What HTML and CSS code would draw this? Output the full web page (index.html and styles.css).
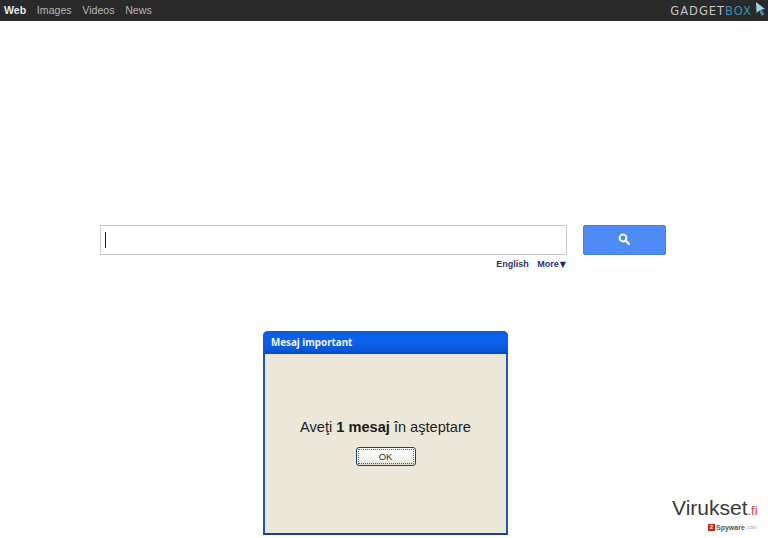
FILE: index.html
```html
<!DOCTYPE html>
<html lang="ro">
<head>
<meta charset="utf-8">
<title>GadgetBox</title>
<link rel="stylesheet" href="styles.css">
</head>
<body>
<header class="topbar">
  <nav class="tabs">
    <a class="tab tab-active">Web</a>
    <a class="tab">Images</a>
    <a class="tab">Videos</a>
    <a class="tab">News</a>
  </nav>
  <div class="logo">
    <span class="logo-gadget">GADGET</span><span class="logo-box">BOX</span>
    <svg class="logo-cursor" width="11" height="14" viewBox="0 0 11 14"><path d="M1 0 L10 7 L6.5 7.5 L9 12.5 L6.5 13.5 L4.5 8.5 L1.5 11 Z" fill="#9fd0dc"/><path d="M4.5 8.5 L6.5 13.5 L9 12.5 L6.5 7.5 Z" fill="#3d8aa6"/></svg>
  </div>
</header>
<main class="page">
  <section class="search">
    <div class="search-row">
      <div class="search-input"><span class="caret"></span></div>
      <button class="search-btn" aria-label="Search">
        <svg class="search-icon" width="12" height="12" viewBox="0 0 12 12"><circle cx="5" cy="5" r="3.4" fill="none" stroke="#fff" stroke-width="2"/><path d="M7.6 7.6 L11 11" stroke="#fff" stroke-width="2.4" stroke-linecap="round"/></svg>
      </button>
    </div>
    <div class="search-links">
      <a class="link-english">English</a>
      <a class="link-more">More<span class="arrow">▼</span></a>
    </div>
  </section>
  <section class="dialog">
    <div class="dialog-title">Mesaj important</div>
    <div class="dialog-body">
      <p class="dialog-msg">Aveţi <b>1 mesaj</b> în aşteptare</p>
      <button class="dialog-ok"><span class="dialog-ok-inner">OK</span></button>
    </div>
  </section>
</main>
<div class="watermark">
  <div class="wm-main">Virukset<span class="wm-fi">.fi</span></div>
  <div class="wm-sub"><span class="wm-badge">2</span>Spyware<span class="wm-com">.com</span></div>
</div>
</body>
</html>
```
FILE: styles.css
```css
* { box-sizing: border-box; }
html, body { margin: 0; padding: 0; }
body {
  width: 768px;
  height: 538px;
  overflow: hidden;
  background: #fff;
  font-family: "Liberation Sans", Arial, sans-serif;
  position: relative;
}
.topbar {
  height: 21px;
  background: #2a2a2a;
  display: flex;
  align-items: center;
  justify-content: space-between;
  padding: 0 2px 0 4px;
}
.tabs { display: flex; gap: 10.7px; }
.tab { font-size: 10.6px; color: #b4b4b4; line-height: 21px; }
.tab-active { color: #e8e8e8; font-weight: bold; }
.logo { display: flex; align-items: center; height: 21px; }
.logo-gadget, .logo-box {
  font-size: 11.5px;
  letter-spacing: 1px;
  font-family: "DejaVu Sans", sans-serif;
  line-height: 14px;
}
.logo-gadget { color: #c4c4c4; }
.logo-box { color: #3b8fb4; }
.logo-cursor { margin: -3px 0 0 3px; }
.page { padding-top: 204px; }
.search { margin-left: 100px; width: 566px; }
.search-row { display: flex; gap: 16px; height: 30px; }
.search-input {
  width: 467px;
  border: 1px solid #c9c9c9;
  background: #fff;
  padding: 6px 0 0 4px;
}
.caret { display: block; width: 1px; height: 16px; background: #222; }
.search-btn {
  width: 83px;
  padding: 0 2px 2px 0;
  border: 1px solid #4a7fd8;
  border-radius: 2px;
  background: #4d8cf4;
  display: flex;
  align-items: center;
  justify-content: center;
}
.search-links {
  width: 466px;
  display: flex;
  justify-content: flex-end;
  gap: 8.5px;
  margin-top: 3px;
  font-size: 9px;
  font-weight: bold;
  line-height: 12px;
}
.link-english { color: #2a3560; }
.link-more { color: #2b2b8c; }
.arrow { font-size: 8px; margin-left: 1px; color: #1c2a70; font-family: "DejaVu Sans", sans-serif; }
.dialog {
  margin: 60px 0 0 263px;
  width: 245px;
  height: 204px;
  background: #ebe8d9;
  border: 2px solid #2455b4;
  border-bottom-color: #1a3f96;
  border-top: 0;
  border-radius: 5px 5px 0 0;
  display: flex;
  flex-direction: column;
}
.dialog-title {
  height: 23px;
  margin: 0 -2px;
  padding: 0 8px;
  border-radius: 5px 5px 0 0;
  background: linear-gradient(#0f57d8 0, #0a5fe6 12%, #0b62ea 50%, #0a55d6 85%, #0a48bc 100%);
  color: #f4f4f4;
  font-family: "Noto Sans", sans-serif;
  font-size: 9.8px;
  font-weight: bold;
  line-height: 24px;
}
.dialog-body {
  flex: 1;
  display: flex;
  flex-direction: column;
  align-items: center;
  padding-top: 64px;
}
.dialog-msg {
  margin: 0;
  font-size: 14.6px;
  line-height: 18px;
  color: #1c1c1c;
}
.dialog-ok {
  width: 60px;
  height: 19px;
  margin-top: 11px;
  padding: 1px;
  border: 1px solid #1f4070;
  border-radius: 3px;
  background: linear-gradient(#fff, #f2f1ea 70%, #d8d6cb);
  font-family: "Liberation Sans", sans-serif;
  font-size: 9.5px;
  color: #333;
}
.dialog-ok-inner {
  display: block;
  height: 100%;
  line-height: 13px;
  border: 1px dotted #666;
}
.watermark {
  position: absolute;
  right: 6px;
  bottom: 6px;
  width: 90px;
  color: #3a3a3a;
}
.wm-main { font-size: 21px; line-height: 24px; }
.wm-fi { font-size: 13px; color: #c9453c; }
.wm-sub { font-size: 7px; line-height: 9px; display: flex; align-items: center; padding-left: 36px; color: #555; font-weight: bold; }
.wm-badge { width: 7px; height: 7px; background: #c5261e; color: #fff; font-size: 6px; line-height: 7px; text-align: center; margin-right: 1px; }
.wm-com { color: #9a9ac0; font-weight: normal; margin-left: 1px; font-size: 5px; }
```
